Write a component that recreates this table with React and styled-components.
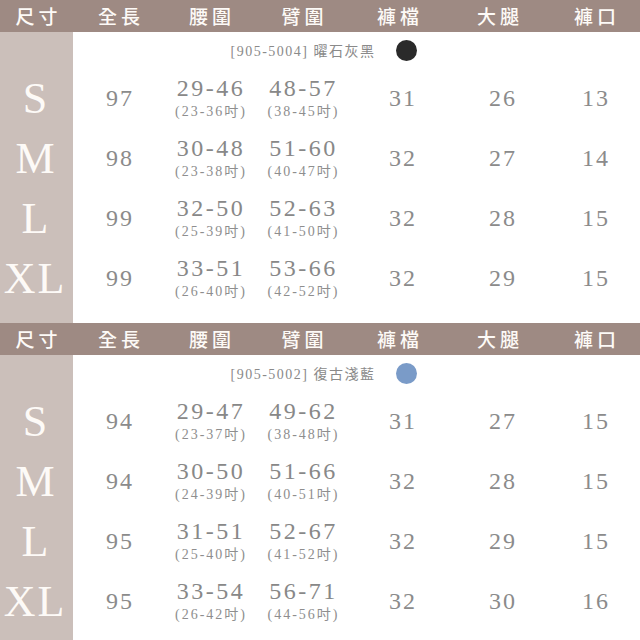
import * as React from "react"
import styled, { createGlobalStyle } from 'styled-components'

const GlobalStyle = createGlobalStyle`
  body {
    margin: 0;
    background: #fff;
    font-family: "Liberation Serif", "Noto Sans CJK TC", serif;
  }
`

const COLS = '73px 92px 90px 95px 104px 96px 90px'

const Page = styled.div`
  width: 640px;
  height: 640px;
  overflow: hidden;
  background: #fff;
`

const HeaderBar = styled.div`
  display: grid;
  grid-template-columns: 73px 92px 90px 95px 96px 104px 90px;
  height: 32px;
  align-items: center;
  background: #9e8a83;
`

const HeaderCell = styled.div`
  text-align: center;
  padding-left: 4px;
  color: #fdfaf7;
  font-family: "Noto Sans CJK TC", sans-serif;
  font-size: 19px;
  font-weight: 500;
  letter-spacing: 4px;
  line-height: 32px;
`

const Body = styled.div`
  display: grid;
  grid-template-columns: 73px 1fr;
`

const SizeColumn = styled.div`
  display: flex;
  flex-direction: column;
  padding-top: 36px;
  padding-bottom: 15px;
  background: #cbbfba;
`

const SizeLetter = styled.div`
  height: 60px;
  display: flex;
  align-items: center;
  justify-content: center;
  padding-right: 3px;
  color: #fdfaf7;
  font-family: "Liberation Serif", serif;
  font-size: 44px;
  letter-spacing: ${p => (p.$wide ? '2px' : '0')};
`

const DataArea = styled.div`
  display: flex;
  flex-direction: column;
`

const CodeRow = styled.div`
  height: 36px;
  display: flex;
  align-items: center;
  justify-content: center;
  gap: 20px;
  padding-right: 66px;
  box-sizing: border-box;
`

const CodeText = styled.span`
  color: #8a8a8a;
  font-size: 14px;
  letter-spacing: 1.5px;
`

const Dot = styled.span`
  width: 21px;
  height: 21px;
  border-radius: 50%;
  background: ${p => p.$color};
`

const Row = styled.div`
  display: grid;
  grid-template-columns: ${COLS.replace('73px ', '')};
  height: 60px;
  align-items: center;
`

const Num = styled.div`
  text-align: center;
  padding-left: 2px;
  color: #8b8b8b;
  font-size: 24px;
  letter-spacing: 2px;
`

const Range = styled.div`
  display: flex;
  flex-direction: column;
  align-items: center;
  padding-left: 2px;
`

const RangeMain = styled.span`
  color: #888;
  font-size: 24px;
  letter-spacing: 2.5px;
  line-height: 27px;
`

const RangeSub = styled.span`
  color: #8e8e8e;
  font-size: 14px;
  letter-spacing: 2px;
  line-height: 19px;
`

const headers = ['尺寸', '全長', '腰圍', '臂圍', '褲檔', '大腿', '褲口']

const tables = [
  {
    code: '[905-5004] 曜石灰黑',
    color: '#2a2a2a',
    rows: [
      ['S', '97', '29-46', '23-36', '48-57', '38-45', '31', '26', '13'],
      ['M', '98', '30-48', '23-38', '51-60', '40-47', '32', '27', '14'],
      ['L', '99', '32-50', '25-39', '52-63', '41-50', '32', '28', '15'],
      ['XL', '99', '33-51', '26-40', '53-66', '42-52', '32', '29', '15'],
    ],
  },
  {
    code: '[905-5002] 復古淺藍',
    color: '#7a9bc8',
    rows: [
      ['S', '94', '29-47', '23-37', '49-62', '38-48', '31', '27', '15'],
      ['M', '94', '30-50', '24-39', '51-66', '40-51', '32', '28', '15'],
      ['L', '95', '31-51', '25-40', '52-67', '41-52', '32', '29', '15'],
      ['XL', '95', '33-54', '26-42', '56-71', '44-56', '32', '30', '16'],
    ],
  },
]

function SizeTable({ table }) {
  return (
    <div>
      <HeaderBar>
        {headers.map(h => (
          <HeaderCell key={h}>{h}</HeaderCell>
        ))}
      </HeaderBar>
      <Body>
        <SizeColumn>
          {table.rows.map(r => (
            <SizeLetter key={r[0]} $wide={r[0].length > 1}>{r[0]}</SizeLetter>
          ))}
        </SizeColumn>
        <DataArea>
          <CodeRow>
            <CodeText>{table.code}</CodeText>
            <Dot $color={table.color} />
          </CodeRow>
          {table.rows.map(r => (
            <Row key={r[0]}>
              <Num>{r[1]}</Num>
              <Range>
                <RangeMain>{r[2]}</RangeMain>
                <RangeSub>({r[3]}吋)</RangeSub>
              </Range>
              <Range>
                <RangeMain>{r[4]}</RangeMain>
                <RangeSub>({r[5]}吋)</RangeSub>
              </Range>
              <Num>{r[6]}</Num>
              <Num>{r[7]}</Num>
              <Num>{r[8]}</Num>
            </Row>
          ))}
        </DataArea>
      </Body>
    </div>
  )
}

export default function App() {
  return (
    <Page>
      <GlobalStyle />
      {tables.map(t => (
        <SizeTable key={t.code} table={t} />
      ))}
    </Page>
  )
}
